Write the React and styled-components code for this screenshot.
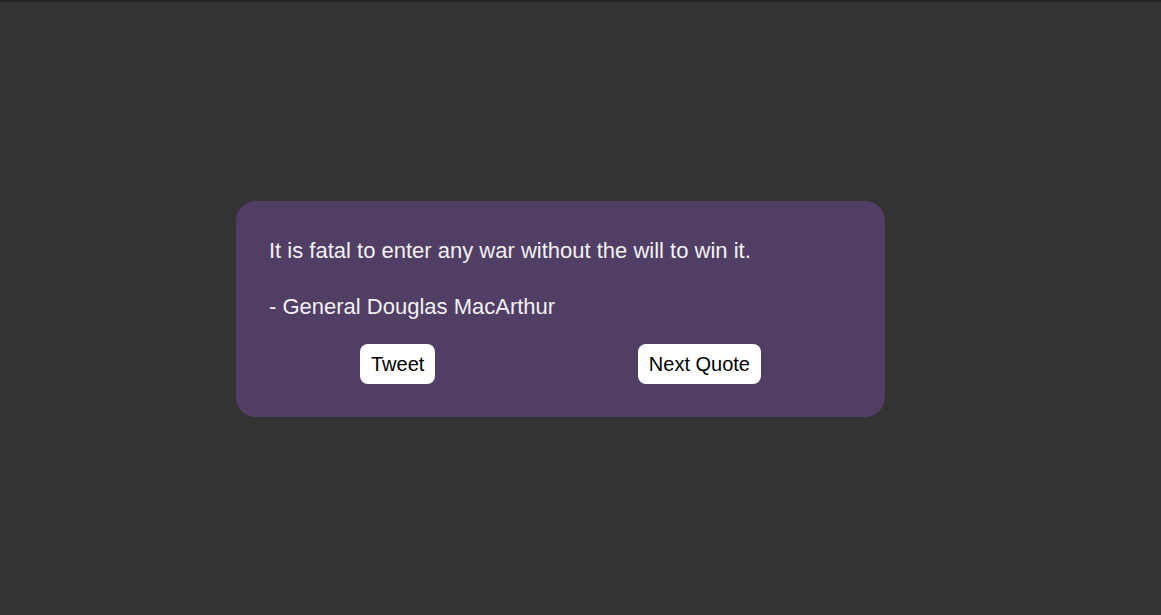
import React from 'react';
import styled, { createGlobalStyle } from 'styled-components';

const GlobalStyle = createGlobalStyle`
    html, body {
        margin: 0;
        background: #333333;
        font-family: 'Liberation Sans', Arial, sans-serif;
    }
`;

const Page = styled.main`
    min-height: 613px;
    border-top: 2px solid #222226;
    padding: 199px 0 0 236px;
    box-sizing: border-box;
`;

const Card = styled.section`
    width: 649px;
    box-sizing: border-box;
    padding: 37px 33px 33px;
    background: #503e65;
    border-radius: 20px;
    color: #f2f2f2;
`;

const Line = styled.p`
    margin: ${(p) => (p.$author ? '31px 0 0' : '0')};
    font-size: 22px;
    line-height: 25px;
`;

const Actions = styled.div`
    display: flex;
    justify-content: space-between;
    padding: 0 91px;
    margin-top: 25px;
`;

const Button = styled.button`
    height: 40px;
    padding: 0 11px;
    border: none;
    border-radius: 8px;
    background: #ffffff;
    color: #000000;
    font-family: 'Liberation Sans', Arial, sans-serif;
    font-size: 20px;
    cursor: pointer;
`;

const App = () => {
    return (
        <>
            <GlobalStyle />
            <Page>
                <Card>
                    <Line>It is fatal to enter any war without the will to win it.</Line>
                    <Line $author>- General Douglas MacArthur</Line>
                    <Actions>
                        <Button>Tweet</Button>
                        <Button>Next Quote</Button>
                    </Actions>
                </Card>
            </Page>
        </>
    );
}

export default App;
